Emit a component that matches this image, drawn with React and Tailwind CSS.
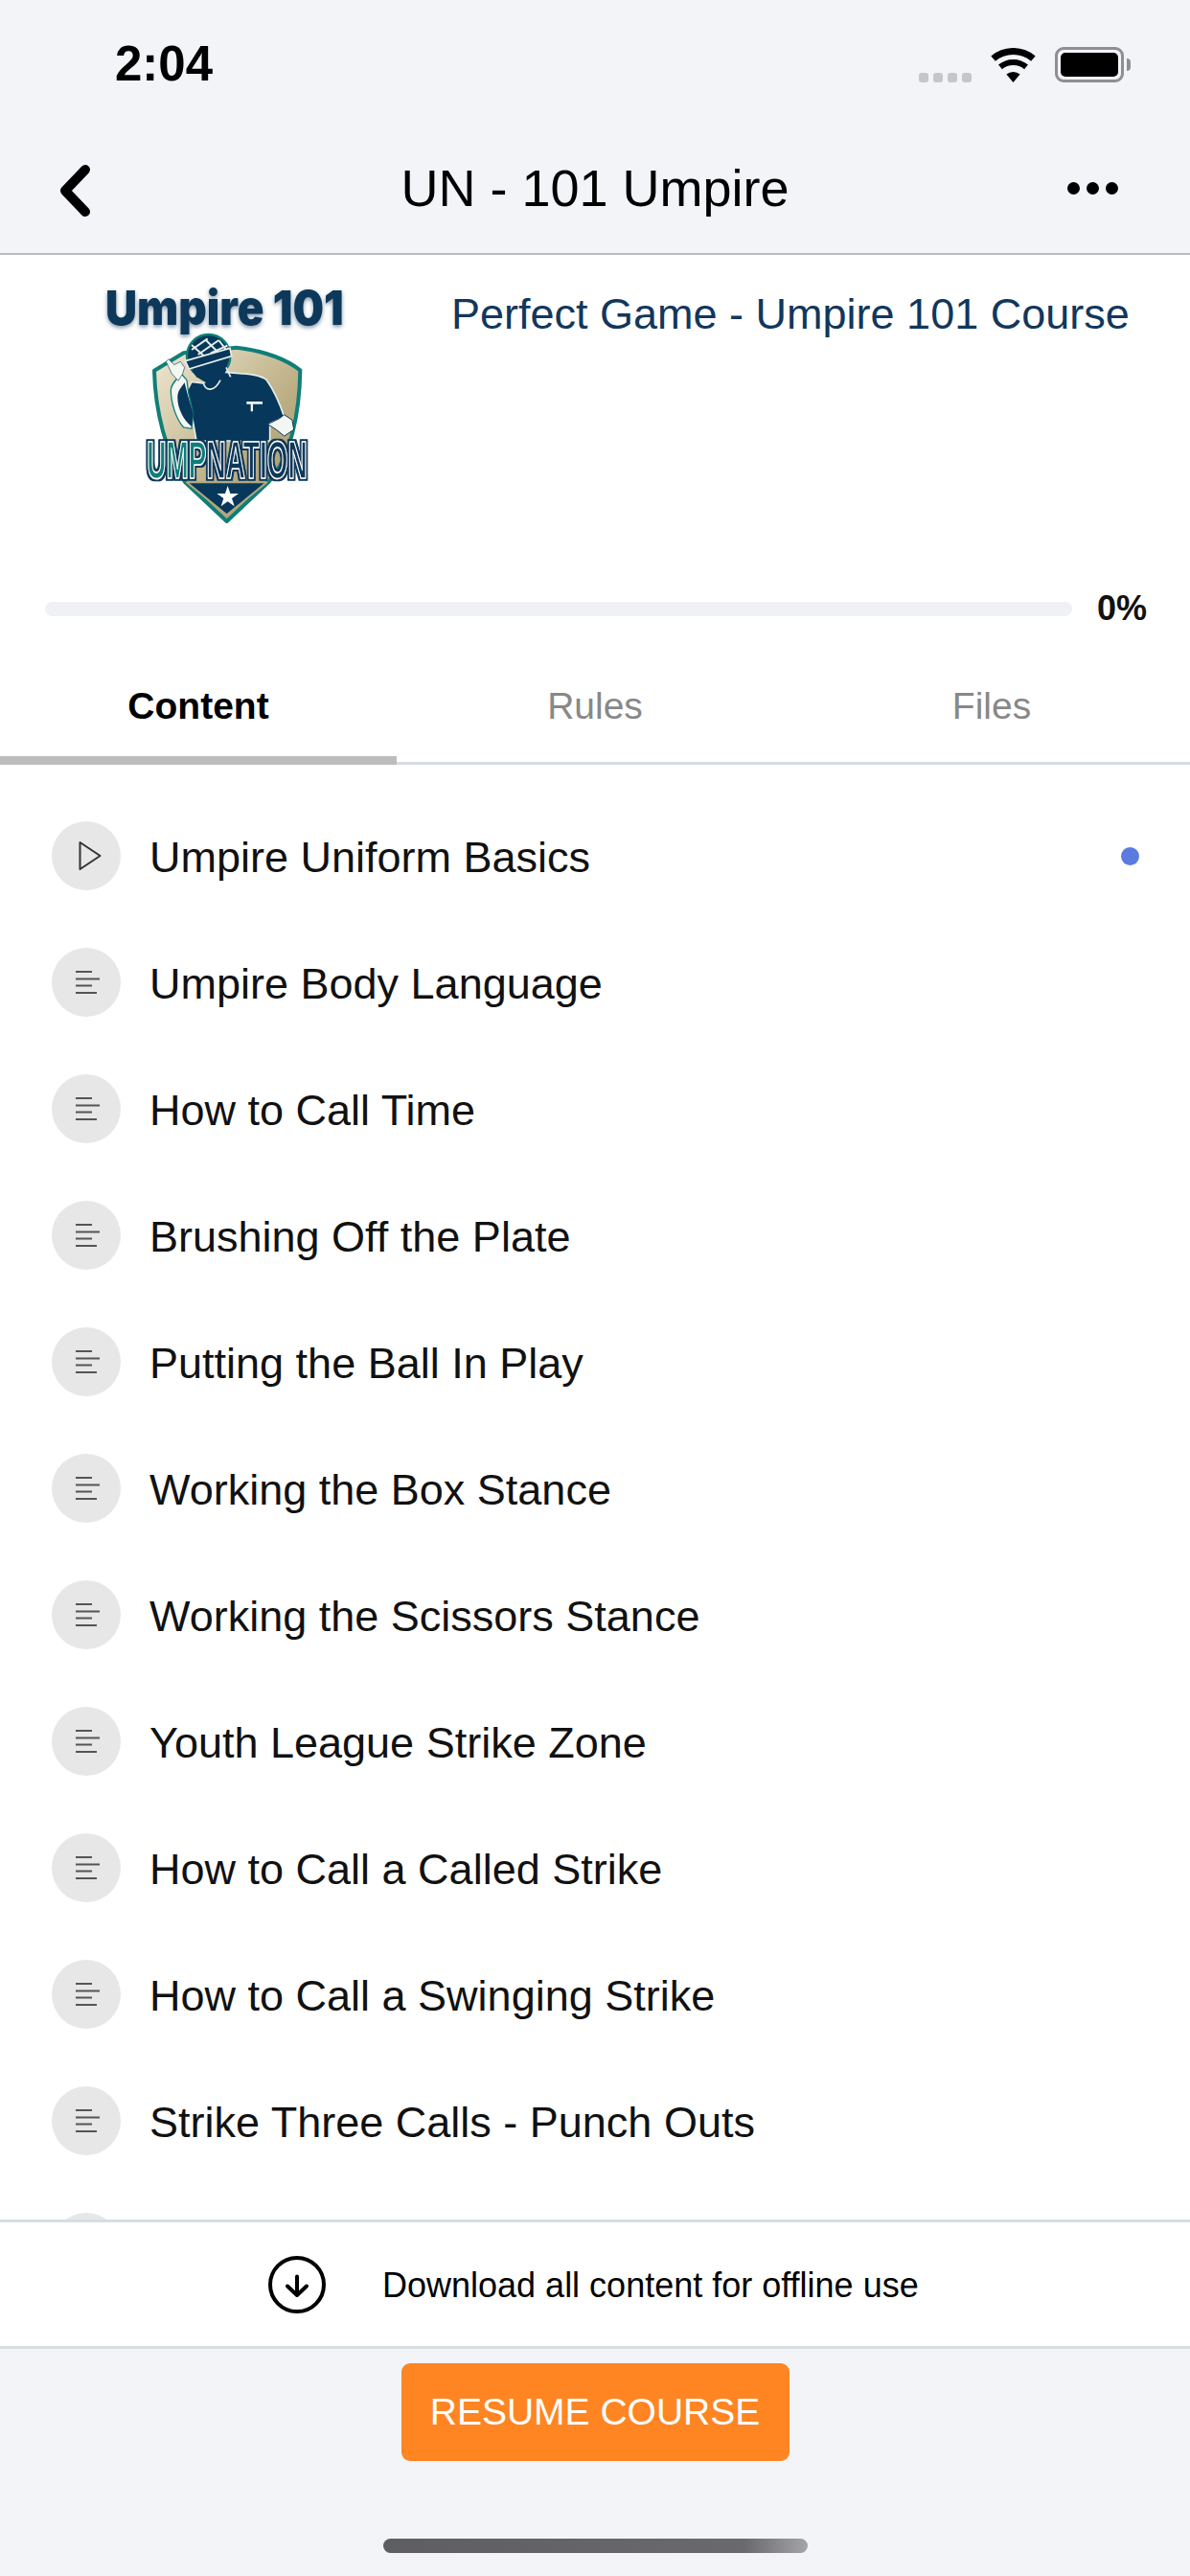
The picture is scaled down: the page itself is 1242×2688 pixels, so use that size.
const lessons = [
  "Umpire Uniform Basics",
  "Umpire Body Language",
  "How to Call Time",
  "Brushing Off the Plate",
  "Putting the Ball In Play",
  "Working the Box Stance",
  "Working the Scissors Stance",
  "Youth League Strike Zone",
  "How to Call a Called Strike",
  "How to Call a Swinging Strike",
  "Strike Three Calls - Punch Outs",
  "",
];

function Wifi() {
  return (
    <svg width="47" height="36" viewBox="0 0 47 36" fill="none" stroke="#000">
      <path d="M2.6 11.1A32.5 32.5 0 0 1 44.4 11.1" strokeWidth="7" />
      <path d="M10 19.9A21 21 0 0 1 37 19.9" strokeWidth="6" />
      <path d="M23.5 36L16.4 27.6A11 11 0 0 1 30.6 27.6Z" fill="#000" stroke="none" />
    </svg>
  );
}

function Logo() {
  return (
    <svg width="340" height="300" viewBox="0 0 1020 900" className="shrink-0 blur-[0.6px]">
      <defs>
        <linearGradient id="gold" x1="0" y1="0" x2="1" y2="1">
          <stop offset="0" stopColor="#efe8d2" />
          <stop offset="0.6" stopColor="#bcae84" />
          <stop offset="1" stopColor="#a3946a" />
        </linearGradient>
        <filter id="soft" x="-5%" y="-20%" width="110%" height="150%">
          <feDropShadow dx="0" dy="6" stdDeviation="6" floodColor="#07375a" floodOpacity="0.55" />
        </filter>
        <filter id="edge" x="-5%" y="-10%" width="110%" height="120%">
          <feMorphology in="SourceAlpha" operator="dilate" radius="5" result="fat" />
          <feFlood floodColor="#07375a" />
          <feComposite in2="fat" operator="in" result="line" />
          <feMerge>
            <feMergeNode in="line" />
            <feMergeNode in="SourceGraphic" />
          </feMerge>
        </filter>
      </defs>
      <text x="150" y="208" textLength="746" lengthAdjust="spacingAndGlyphs" fontFamily="Inter" fontWeight="900" fontSize="150" fill="#07375a" filter="url(#soft)">
        Umpire 101
      </text>
      {/* shield */}
      <path d="M303 350L395 295L560 278C640 288 710 310 760 349C758 480 732 620 660 700L530 822L400 700C340 610 306 480 303 350Z" fill="url(#gold)" stroke="#0f7e78" strokeWidth="12" strokeLinejoin="round" />
      {/* umpire, drawn from the crop at 150,340 */}
      <g transform="translate(270 210)">
        <path d="M255 145L290 148C330 150 370 155 385 170C410 205 425 240 440 285L395 305L395 360L165 360L150 275L132 210L150 175L185 180Z" fill="#07375a" stroke="#e6eeea" strokeWidth="5" />
        <path d="M118 150C100 170 85 185 85 200C85 240 100 290 125 318L150 322L155 275L140 210L135 170Z" fill="#f4f6f2" stroke="#0f7e78" strokeWidth="4" />
        <path d="M128 178C115 195 106 205 106 225C106 260 125 295 150 315L155 275L136 210Z" fill="#07375a" />
        <path d="M70 112L78 104L95 122L115 112L128 130L122 150L108 172L88 150Z" fill="#f4f6f2" stroke="#0f4a63" strokeWidth="2" />
        <path d="M388 308L425 290L440 278L465 295L470 325L440 345L415 325Z" fill="#f4f6f2" stroke="#07375a" strokeWidth="3" />
        <path d="M322 237H372V245H342V268H335V245H322Z" fill="#f4f6f2" />
        <circle cx="203" cy="95" r="68" fill="#07375a" stroke="#0f7e78" strokeWidth="7" />
        <path d="M150 75L200 40M170 90L235 45M210 85L262 62M150 60L190 95M195 45L235 85M235 45L262 80" stroke="#e6eeea" strokeWidth="6" fill="none" />
        <path d="M130 110L270 70L275 95L142 135Z" fill="#07375a" stroke="#e6eeea" strokeWidth="5" />
        <path d="M150 140L255 105L262 130L245 170L195 178L165 160Z" fill="#07375a" />
        <path d="M187 180C195 206 222 206 240 170" fill="none" stroke="#e6eeea" strokeWidth="5" />
        <path d="M258 130L272 160" fill="none" stroke="#e6eeea" strokeWidth="5" />
      </g>
      <path d="M405 700H655L530 802Z" fill="#07375a" stroke="#b4a67c" strokeWidth="6" strokeLinejoin="round" />
      <polygon points="533,711 541,735 567,735 546,750 554,775 533,760 512,775 520,750 499,735 525,735" fill="#ffffff" />
      <text x="280" y="686" textLength="502" lengthAdjust="spacingAndGlyphs" filter="url(#edge)" fontFamily="Liberation Sans" fontWeight="700" fontSize="165" stroke="#ffffff" strokeWidth="5" strokeLinejoin="round">
        <tspan fill="#0f7e78">UMP</tspan>
        <tspan fill="#07375a">NATION</tspan>
      </text>
    </svg>
  );
}

function LessonIcon({ video }) {
  return (
    <div className="w-[72px] h-[72px] shrink-0 rounded-full bg-[#e7e7e7]">
      {video ? (
        <svg width="72" height="72" viewBox="0 0 72 72" fill="none" stroke="#333" strokeWidth="2" strokeLinejoin="round">
          <path d="M29.5 22V50L50.5 36Z" />
        </svg>
      ) : (
        <svg width="72" height="72" viewBox="0 0 72 72" fill="none" stroke="#555" strokeWidth="2.2">
          <path d="M25 25H42M25 32.5H50M25 39.5H42M25 47H47" />
        </svg>
      )}
    </div>
  );
}

export default function App() {
  return (
    <div className="w-[1242px] h-[2688px] flex flex-col overflow-hidden bg-[#f2f4f8] font-['Liberation_Sans',sans-serif] text-black">
      {/* status bar */}
      <div className="h-[134px] shrink-0 flex items-start justify-between pl-[120px] pr-[62px] pt-[38px]">
        <span className="text-[51px] leading-[58px] font-bold">2:04</span>
        <div className="flex items-center pt-[11px]">
          <div className="flex gap-[5px] mt-[26px]">
            <div className="w-[10px] h-[10px] rounded-[3px] bg-[#c4c6ca]" />
            <div className="w-[10px] h-[10px] rounded-[3px] bg-[#c4c6ca]" />
            <div className="w-[10px] h-[10px] rounded-[3px] bg-[#c4c6ca]" />
            <div className="w-[10px] h-[10px] rounded-[3px] bg-[#c4c6ca]" />
          </div>
          <div className="ml-[20px]"><Wifi /></div>
          <div className="ml-[20px] w-[72px] h-[37px] rounded-[9px] border-[3px] border-[#8e8e93] p-[3px]">
            <div className="w-full h-full rounded-[5px] bg-black" />
          </div>
          <div className="ml-[3px] w-[4px] h-[13px] rounded-r-full bg-[#8e8e93]" />
        </div>
      </div>

      {/* nav */}
      <div className="h-[132px] shrink-0 grid grid-cols-[1fr_auto_1fr] items-center pl-[62px] pr-[75px] pb-[6px] border-b-2 border-[#bcbcbc]">
        <svg width="34" height="58" viewBox="0 0 34 58" fill="none" stroke="#000" strokeWidth="10" strokeLinecap="round" strokeLinejoin="round" className="mt-[6px]">
          <path d="M27 7L6 29L27 51" />
        </svg>
        <span className="text-[54px] leading-[62px] pl-[13px]">UN - 101 Umpire</span>
        <div className="flex gap-[7px] justify-end">
          <div className="w-[13px] h-[13px] rounded-full bg-black" />
          <div className="w-[13px] h-[13px] rounded-full bg-black" />
          <div className="w-[13px] h-[13px] rounded-full bg-black" />
        </div>
      </div>

      <div className="flex-1 min-h-0 flex flex-col bg-white">
        {/* course head */}
        <div className="h-[344px] shrink-0 flex pl-[60px]">
          <div className="pt-[4px]"><Logo /></div>
          <div className="pl-[71px] pt-[36px] text-[45px] leading-[52px] text-[#12375c]">Perfect Game - Umpire 101 Course</div>
        </div>

        {/* progress */}
        <div className="h-[50px] shrink-0 flex items-center pl-[47px]">
          <div className="w-[1072px] h-[15px] rounded-full bg-[#f0f1f5]" />
          <span className="ml-[26px] text-[36px] leading-[42px] font-bold text-[#111]">0%</span>
        </div>

        {/* tabs */}
        <div className="h-[138px] shrink-0 grid grid-cols-3 text-[39px] leading-[46px] text-center">
          <div className="pt-[54px] font-bold border-b-[9px] border-[#bdbdbd]">Content</div>
          <div className="pt-[54px] text-[#888] border-b-[3px] border-[#d8dce6]">Rules</div>
          <div className="pt-[54px] text-[#888] border-b-[3px] border-[#d8dce6]">Files</div>
        </div>

        {/* lessons */}
        <div className="flex-1 min-h-0 overflow-hidden pt-[29px]">
          {lessons.map((title, i) => (
            <div key={i} className="h-[132px] flex items-center pl-[54px] pr-[53px]">
              <LessonIcon video={i === 0} />
              <span className="ml-[30px] pt-[3px] flex-1 text-[45px] leading-[52px] text-[#111]">{title}</span>
              {i === 0 && <div className="w-[19px] h-[19px] rounded-full bg-[#5b7be0]" />}
            </div>
          ))}
        </div>

        {/* download */}
        <div className="h-[135px] shrink-0 flex items-center pl-[280px] bg-white border-y-[3px] border-[#d8dde3]">
          <svg width="60" height="60" viewBox="0 0 60 60" fill="none" stroke="#000" strokeLinecap="round" strokeLinejoin="round">
            <circle cx="30" cy="30" r="28" strokeWidth="4" />
            <path d="M30 21.5V41M20 31.5L30 41L40 31.5" strokeWidth="4" />
          </svg>
          <span className="ml-[59px] pt-[3px] whitespace-nowrap text-[36px] leading-[50px]">Download all content for offline use</span>
        </div>
      </div>

      {/* bottom */}
      <div className="h-[237px] shrink-0 flex flex-col items-center pt-[15px] bg-[#f2f4f8]">
        <button className="w-[405px] h-[102px] rounded-[9px] bg-[#ff8522] text-white text-[39px] pt-[1px]">RESUME COURSE</button>
        <div className="mt-[81px] w-[443px] h-[15px] rounded-full bg-gradient-to-r from-[#5e5e60] via-[#6a6a6c] via-85% to-[#a5a5a7]" />
      </div>
    </div>
  );
}
